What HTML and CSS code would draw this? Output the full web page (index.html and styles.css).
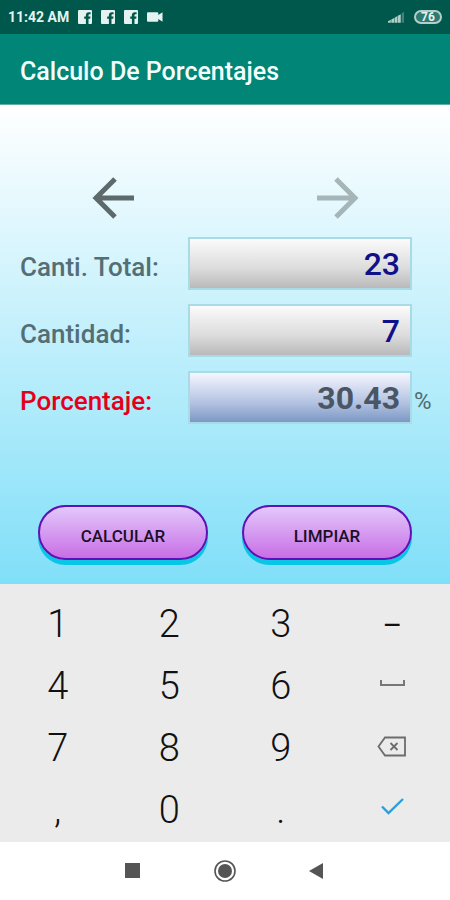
FILE: index.html
```
<!DOCTYPE html>
<html lang="es">
<head>
    <meta charset="UTF-8">
    <meta name="viewport" content="width=device-width, initial-scale=1.0">
    <title>Calculo De Porcentajes</title>
    <link rel="stylesheet" href="styles.css">
</head>
<body>
    <!-- Status bar -->
    <div class="status-bar">
        <span class="time">11:42 AM</span>
        <svg class="app-icon" viewBox="0 0 14 14"><path fill="#e6f2f0" d="M1 0h12a1 1 0 0 1 1 1v12a1 1 0 0 1-1 1h-2.500V8.800h1.700l.3-2.200h-2V5.300c0-.7.3-1.100 1.100-1.100h1V2.200h-1.700C9 2.200 7.900 3.300 7.900 5v1.600H6.200v2.200h1.700V14H1a1 1 0 0 1-1-1V1a1 1 0 0 1 1-1z"/></svg>
        <svg class="app-icon" viewBox="0 0 14 14"><path fill="#e6f2f0" d="M1 0h12a1 1 0 0 1 1 1v12a1 1 0 0 1-1 1h-2.500V8.800h1.700l.3-2.200h-2V5.300c0-.7.3-1.100 1.100-1.100h1V2.200h-1.700C9 2.200 7.900 3.300 7.900 5v1.600H6.200v2.200h1.700V14H1a1 1 0 0 1-1-1V1a1 1 0 0 1 1-1z"/></svg>
        <svg class="app-icon" viewBox="0 0 14 14"><path fill="#e6f2f0" d="M1 0h12a1 1 0 0 1 1 1v12a1 1 0 0 1-1 1h-2.500V8.800h1.700l.3-2.200h-2V5.300c0-.7.3-1.100 1.100-1.100h1V2.200h-1.700C9 2.200 7.900 3.300 7.900 5v1.600H6.200v2.200h1.700V14H1a1 1 0 0 1-1-1V1a1 1 0 0 1 1-1z"/></svg>
        <svg class="camera-icon" viewBox="0 0 17 10"><path fill="#e6f2f0" d="M1 0h10a1 1 0 0 1 1 1v2L16.500 0v10L12 7v2a1 1 0 0 1-1 1H1a1 1 0 0 1-1-1V1a1 1 0 0 1 1-1z"/></svg>
        <svg class="signal-icon" viewBox="0 0 18 12">
            <path fill="#b3cfca" d="M0 12v-1.500L3 9v3zM3.500 12V8.700L6.500 7v5zM7 12V6.700L10 5v7zM10.500 12V4.700l3-1.700v9z"/>
            <path fill="#3f837a" d="M14.500 12V2L17 .5V12z"/>
        </svg>
        <span class="battery">76</span>
    </div>

    <header class="app-bar">
        <h1>Calculo De Porcentajes</h1>
    </header>

    <main class="content">
        <div class="arrows">
            <button type="button" class="arrow" aria-label="Anterior">
                <svg viewBox="0 0 42 42"><path d="M42 21H4M23 2 4 21l19 19"/></svg>
            </button>
            <button type="button" class="arrow next" aria-label="Siguiente">
                <svg viewBox="0 0 42 42"><path d="M0 21h38M19 2l19 19-19 19"/></svg>
            </button>
        </div>

        <form id="calc-form">
            <div class="fields">
                <label for="total">Canti. Total:</label>
                <input type="text" id="total" inputmode="decimal" value="23">

                <label for="cantidad">Cantidad:</label>
                <input type="text" id="cantidad" inputmode="decimal" value="7">

                <label for="porcentaje" class="result-label">Porcentaje:</label>
                <input type="text" id="porcentaje" class="result" value="30.43" readonly>
                <span class="unit">%</span>
            </div>

            <div class="actions">
                <button type="submit" class="action">CALCULAR</button>
                <button type="button" class="action" id="limpiar">LIMPIAR</button>
            </div>
        </form>
    </main>

    <!-- Numeric keyboard -->
    <div class="keypad">
        <button type="button" class="key">1</button>
        <button type="button" class="key">2</button>
        <button type="button" class="key">3</button>
        <button type="button" class="key minus">–</button>
        <button type="button" class="key">4</button>
        <button type="button" class="key">5</button>
        <button type="button" class="key">6</button>
        <button type="button" class="key" aria-label="Espacio">
            <svg viewBox="0 0 30 24"><path stroke="#777" stroke-width="2" d="M4 6v5h23V6"/></svg>
        </button>
        <button type="button" class="key">7</button>
        <button type="button" class="key">8</button>
        <button type="button" class="key">9</button>
        <button type="button" class="key" aria-label="Borrar">
            <svg viewBox="0 0 30 24"><path stroke="#6c6c6c" stroke-width="1.800" d="M8 1.500h20v18H8l-6.500-9zM13.500 7l7 7M20.500 7l-7 7"/></svg>
        </button>
        <button type="button" class="key">,</button>
        <button type="button" class="key">0</button>
        <button type="button" class="key">.</button>
        <button type="button" class="key" aria-label="Aceptar">
            <svg viewBox="0 0 30 24"><path stroke="#2b9fd8" stroke-width="2.400" d="M5 8.500l6.500 6.500L26 1"/></svg>
        </button>
    </div>

    <nav class="nav-bar">
        <button type="button" aria-label="Recientes">
            <svg viewBox="0 0 24 24"><path fill="#555" d="M4 4h15v15H4z"/></svg>
        </button>
        <button type="button" aria-label="Inicio">
            <svg viewBox="0 0 24 24">
                <circle cx="12" cy="12" r="10" fill="none" stroke="#555" stroke-width="1.600"/>
                <circle cx="12" cy="12" r="7" fill="#555"/>
            </svg>
        </button>
        <button type="button" aria-label="Atras">
            <svg viewBox="0 0 24 24"><path fill="#555" d="M18 4v16L4 12z"/></svg>
        </button>
    </nav>

    <script>
        const total = document.getElementById('total');
        const cantidad = document.getElementById('cantidad');
        const porcentaje = document.getElementById('porcentaje');

        document.getElementById('calc-form').addEventListener('submit', (e) => {
            e.preventDefault();
            const result = cantidad.value / total.value * 100;
            porcentaje.value = isFinite(result) ? result.toFixed(2) : '';
        });

        document.getElementById('limpiar').addEventListener('click', () => {
            total.value = '';
            cantidad.value = '';
            porcentaje.value = '';
        });
    </script>
</body>
</html>
```

FILE: styles.css
```
* {
    box-sizing: border-box;
}

body {
    font-family: Roboto, sans-serif;
    margin: 0;
    min-height: 100vh;
    display: flex;
    flex-direction: column;
    background: #fff;
}

button {
    font-family: inherit;
    padding: 0;
    border: none;
    background: none;
    cursor: pointer;
}

svg {
    display: block;
}

.status-bar {
    display: flex;
    align-items: center;
    gap: 9px;
    height: 34px;
    padding: 0 8px;
    background: #00574b;
    color: #e6f2f0;
}

.time {
    font-size: 14px;
    font-weight: 700;
}

.app-icon {
    width: 14px;
    height: 14px;
}

.camera-icon {
    width: 16px;
    height: 10px;
}

.signal-icon {
    width: 17px;
    height: 12px;
    margin-left: auto;
}

.battery {
    width: 28px;
    height: 14px;
    border: 2px solid #b3cfca;
    border-radius: 7px;
    background: #2f7a70;
    font-size: 12px;
    font-weight: 700;
    line-height: 10px;
    text-align: center;
}

.app-bar {
    display: flex;
    align-items: center;
    height: 71px;
    padding: 4px 20px 0;
    background: #008577;
    border-bottom: 1px solid #5fada4;
}

h1 {
    margin: 0;
    font-size: 25px;
    font-weight: 500;
    color: #f4fffd;
}

.content {
    flex: 1;
    padding-top: 65px;
    background: linear-gradient(to bottom, #ffffff, #80dff8);
}

.arrows {
    display: grid;
    grid-template-columns: 1fr 1fr;
    justify-items: center;
    margin-bottom: 11px;
}

.arrow {
    padding: 7px;
}

.arrow svg {
    width: 42px;
    height: 42px;
    fill: none;
    stroke: #5e696b;
    stroke-width: 5;
}

.arrow.next svg {
    stroke: #a5b5b8;
}

.fields {
    display: grid;
    grid-template-columns: 168px 1fr 38px;
    row-gap: 14px;
    align-items: center;
    padding-left: 20px;
}

.fields label {
    grid-column: 1;
    padding-top: 6px;
    font-size: 26px;
    font-weight: 500;
    color: #546e76;
}

.fields .result-label {
    color: #e4001b;
}

.fields input {
    width: 100%;
    min-width: 0;
    height: 53px;
    padding: 0 10px;
    border: 2px solid #a9dbe6;
    border-radius: 0;
    background: linear-gradient(to bottom, #fbfbfb, #dcdcdc 60%, #b9b9bb);
    font-family: inherit;
    font-size: 32px;
    font-weight: 500;
    text-align: right;
    color: #10108a;
    outline: none;
}

.fields .result {
    background: linear-gradient(to bottom, #f6f6ff, #b4c3e2 60%, #7c98c4);
    font-weight: 700;
    color: #4b5664;
}

.unit {
    padding: 6px 0 0 2px;
    font-size: 24px;
    color: #4f6b72;
}

.actions {
    display: grid;
    grid-template-columns: 1fr 1fr;
    gap: 34px;
    padding: 81px 38px 24px;
}

.action {
    height: 55px;
    padding-top: 6px;
    border: 2px solid #5c12b4;
    border-radius: 28px;
    background: linear-gradient(to bottom, #e2c8fb, #c96ee6);
    box-shadow: 0 5px 0 #09c6e6;
    font-size: 17px;
    font-weight: 500;
    color: #1c0f26;
}

.keypad {
    display: grid;
    grid-template-columns: repeat(4, 1fr);
    grid-auto-rows: 62px;
    padding: 9px 2px 1px;
    background: #ebebeb;
}

.key {
    display: flex;
    justify-content: center;
    align-items: center;
    font-size: 38px;
    font-weight: 300;
    color: #111;
}

.key.minus {
    font-size: 30px;
    font-weight: 400;
}

.key svg {
    width: 30px;
    height: 24px;
    fill: none;
}

.nav-bar {
    display: flex;
    justify-content: center;
    align-items: center;
    gap: 68px;
    height: 58px;
    background: #fff;
}

.nav-bar svg {
    width: 24px;
    height: 24px;
}
```
